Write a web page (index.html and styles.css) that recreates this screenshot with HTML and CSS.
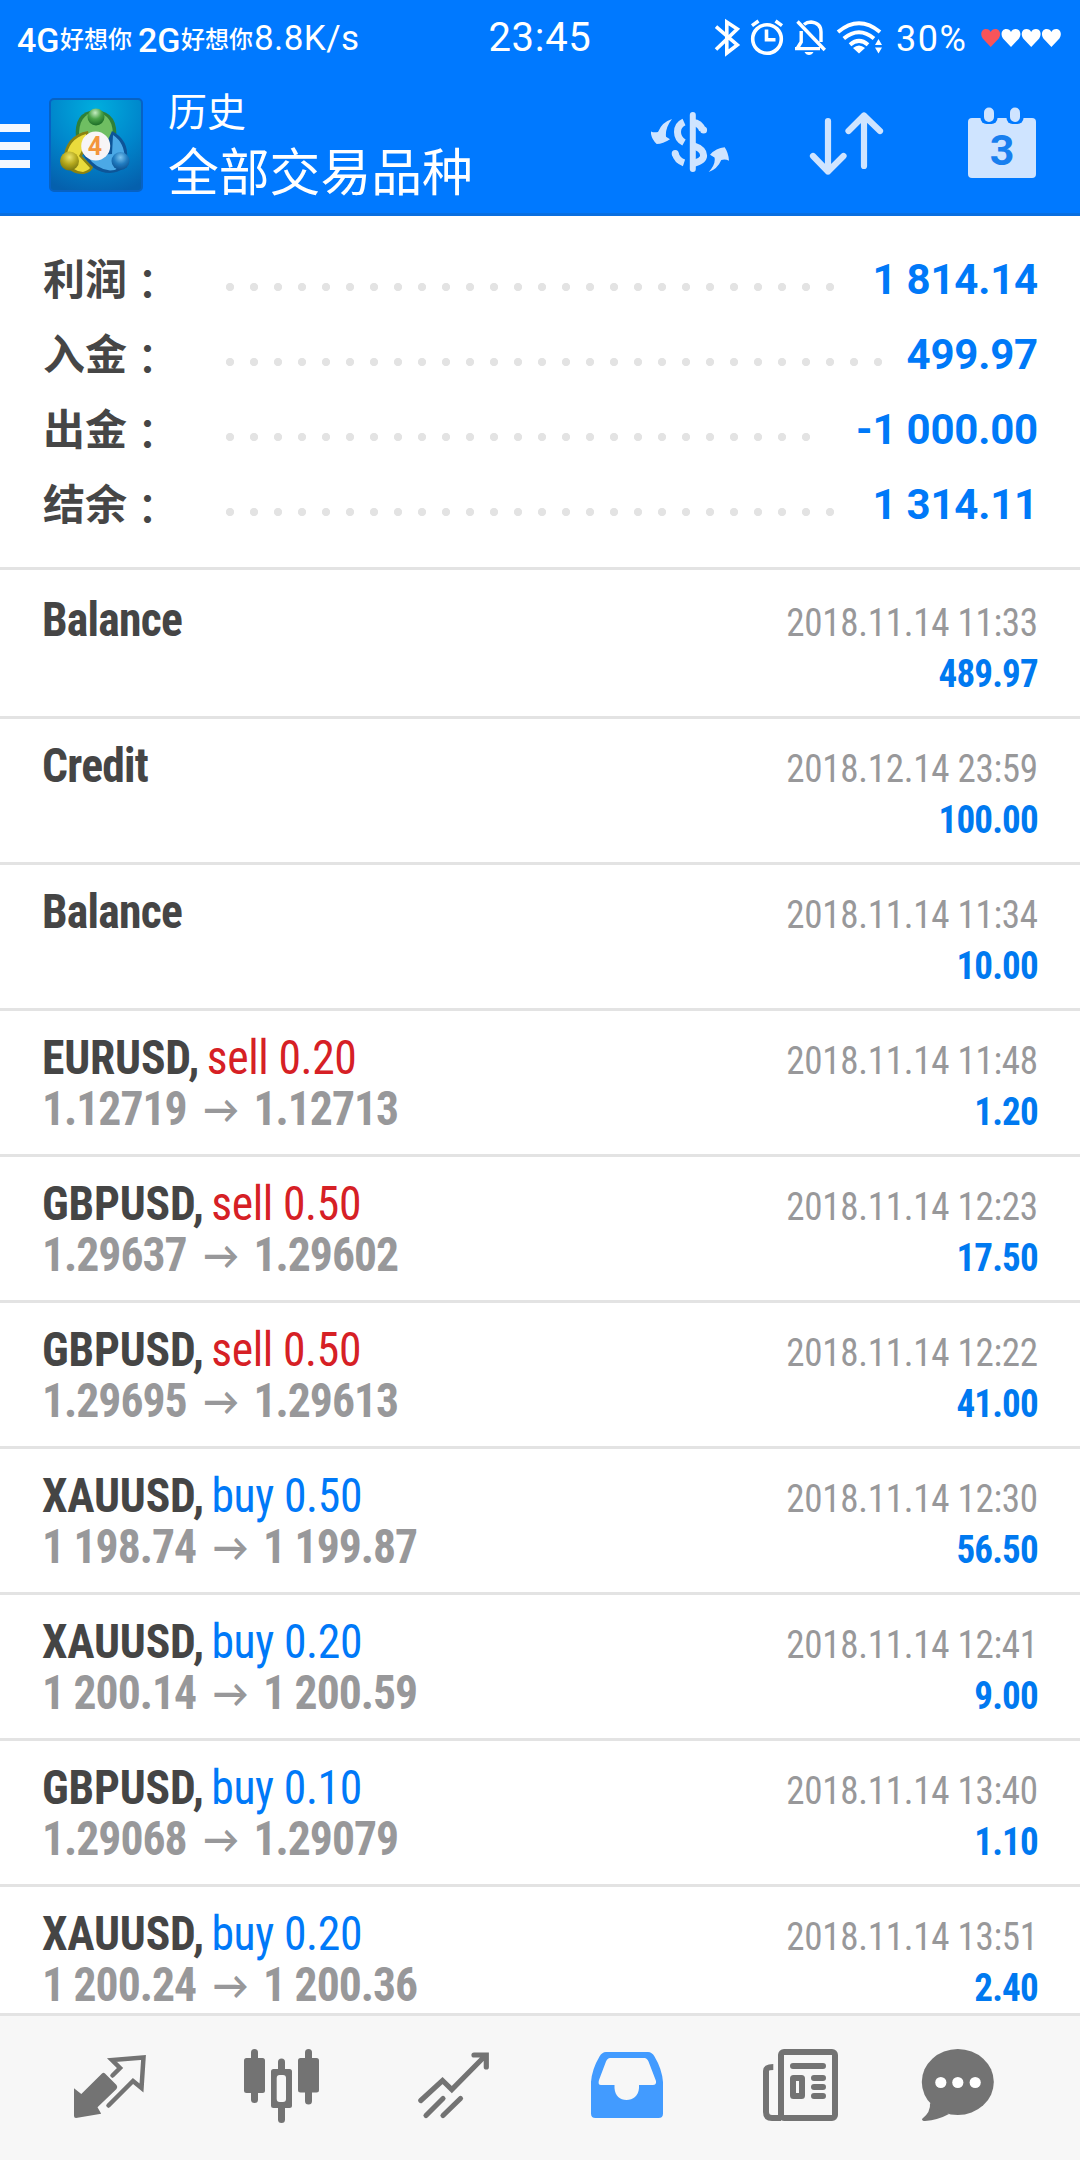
FILE: index.html
```html
<!DOCTYPE html>
<html lang="zh-CN">
<head>
<meta charset="utf-8">
<title>历史</title>
<link rel="stylesheet" href="styles.css">
</head>
<body>
<div class="screen">
  <header class="top">
    <div class="status">
      <div class="carrier">
        <span class="net">4G</span><span class="sim">好想你</span><span class="net second">2G</span><span class="sim">好想你</span><span class="speed">8.8K/s</span>
      </div>
      <div class="clock">23:45</div>
      <div class="indicators">
        <svg width="170" height="40" viewBox="713 17 170 40" fill="none" stroke="#fff" stroke-width="3.6">
          <path d="M716 25.7L737.3 44L726.8 52V21L737.3 28L716 48.5"/>
          <circle cx="767" cy="38" r="14.3"/>
          <path d="M766.5 28.5V38.8H775.5M752 24.6L758.5 20M775.5 20L782 24.6"/>
          <path d="M797.5 20.5L824.8 49M795 47.6H820M801.2 30V41L797.5 47M804 23.5Q807 21 811 21Q821 22 821 31V41" stroke-width="3.4"/>
          <path d="M804.5 51H813.5Q812 54 809 54Q806 54 804.500 51Z" fill="#fff" stroke="none"/>
          <path d="M838 31Q859 13.500 880 31M843.800 37.500Q859 25 874 37.500M850 43.700Q859 36 868 43.700" stroke-width="4"/>
          <path d="M853 47Q859 42 865 47L859 52.500ZM875 44L878.500 38L882 44ZM875 46.500H882L878.500 52.500Z" fill="#fff" stroke="none"/>
        </svg>
        <span class="battery">30%</span>
        <svg width="82" height="20" viewBox="0 0 82 20">
          <defs><path id="heart" d="M10 19L2 10.500C-1 6 1 1 5.200 1C7.500 1 9.200 2 10 4C10.800 2 12.500 1 14.800 1C19 1 21 6 18 10.500Z"/></defs>
          <use href="#heart" x="0.700" fill="#f8545a"/>
          <use href="#heart" x="21" fill="#fff"/>
          <use href="#heart" x="41.200" fill="#fff"/>
          <use href="#heart" x="61.400" fill="#fff"/>
        </svg>
      </div>
    </div>
    <div class="appbar">
      <div class="menu"><i></i><i></i><i></i></div>
      <svg class="logo" width="94" height="94" viewBox="49 97 94 94">
        <defs>
          <radialGradient id="tile" cx=".5" cy=".1" r=".95"><stop offset="0" stop-color="#00aede"/><stop offset=".55" stop-color="#0085cb"/><stop offset="1" stop-color="#0560ad"/></radialGradient>
          <radialGradient id="gn" cx=".45" cy=".25" r=".75"><stop offset="0" stop-color="#c4ecc0"/><stop offset=".5" stop-color="#4aa348"/><stop offset="1" stop-color="#1b6b27"/></radialGradient>
          <radialGradient id="yl" cx=".5" cy=".3" r=".75"><stop offset="0" stop-color="#ece56a"/><stop offset=".5" stop-color="#b5a81c"/><stop offset="1" stop-color="#6f7010"/></radialGradient>
          <radialGradient id="bl" cx=".5" cy=".3" r=".75"><stop offset="0" stop-color="#7cc4ef"/><stop offset=".5" stop-color="#217cc0"/><stop offset="1" stop-color="#0a4c8c"/></radialGradient>
        </defs>
        <rect x="50" y="98" width="92" height="92" rx="4" fill="url(#tile)" stroke="#0762c4" stroke-width="2"/>
        <path d="M76 138Q73 110 96 109Q119 111 116 139L106 158H86Z" fill="#2f8038"/>
        <path d="M79 137Q78 112 96 111.500Q114 113 113 138L106 150H88Z" fill="#6fbe62"/>
        <path d="M112 130Q129 139 127 158Q126 171 110 172Q92 172 83 153L104 148Z" fill="#0d5598"/>
        <path d="M113 134Q125 142 124.500 158Q122 169 110 169.500Q96 168 87 155L112 153Z" fill="#4ba9e6"/>
        <path d="M88 130Q65 134 63 160Q70 174 84 173Q92 171 93 166L82 155L90 140Z" fill="#8a8210"/>
        <path d="M86 133Q68 138 66 158Q73 171 83 171Q89 169 90 167L79 155L86 142Z" fill="#eadb3c"/>
        <circle cx="96" cy="116" r="8.500" fill="url(#gn)"/>
        <circle cx="69.500" cy="160" r="9.500" fill="url(#yl)"/>
        <circle cx="120.500" cy="160" r="9" fill="url(#bl)"/>
        <circle cx="95.700" cy="145" r="14.500" fill="#f7f5f6"/>
        <text x="95" y="154" text-anchor="middle" class="logo-num">4</text>
      </svg>
      <div class="titles">
        <div class="section">历史</div>
        <div class="filter">全部交易品种</div>
      </div>
      <div class="actions">
        <svg width="80" height="81" viewBox="651 104 80 81" fill="none" stroke="#cfe4ff" stroke-width="7">
          <path d="M692.800 115V169" stroke-width="6" stroke-linecap="round"/>
          <path d="M684 122Q677.500 125 677.500 132Q677.500 139 684 142.500M693 122.500Q700 123 702.500 130" />
          <path d="M703.600 130v.1M675.200 153.500v.1" stroke-linecap="round"/>
          <path d="M693 145.500Q703.600 149 703.600 155.500Q703.600 161 693 163.500M675.200 153.500Q677 160.500 684 162.800"/>
          <path d="M672 119Q662 122 658 132Q654 133 650.700 131.300Q651 139 656.700 144Q663 144 670 139.300L666 136.700Q665 128 672 119ZM708.700 172Q716 164 714.500 157.500L710 154.700Q716 148 724.700 147.300Q728.500 153 729 160.700Q725 158.500 721.300 160Q717.500 169 708.700 172Z" fill="#cfe4ff" stroke="none"/>
        </svg>
        <svg width="80" height="81" viewBox="809 104 80 81" fill="none" stroke="#cfe4ff" stroke-width="6.200" stroke-linecap="round" stroke-linejoin="round">
          <path d="M828 121V171.500M813 156L828 171.500L843.500 156M864 166V115.500M848.500 131L864 115.500L880 131"/>
        </svg>
        <svg width="70" height="81" viewBox="967 104 70 81">
          <rect x="968" y="118" width="68" height="60" rx="4" fill="#cfe4ff"/>
          <rect x="980.500" y="108" width="17" height="16" rx="6" fill="#0079ff"/>
          <rect x="1006.500" y="108" width="17" height="16" rx="6" fill="#0079ff"/>
          <rect x="984" y="107.500" width="10" height="14.500" rx="5" fill="#cfe4ff"/>
          <rect x="1010" y="107.500" width="10" height="14.500" rx="5" fill="#cfe4ff"/>
          <text x="1002" y="165" text-anchor="middle" class="cal-num">3</text>
        </svg>
      </div>
    </div>
  </header>

  <section class="summary">
    <div class="line"><span class="label">利润<b>：</b></span><span class="dots" style="width:624px"></span><span class="total">1 814.14</span></div>
    <div class="line"><span class="label">入金<b>：</b></span><span class="dots" style="width:672px"></span><span class="total">499.97</span></div>
    <div class="line"><span class="label">出金<b>：</b></span><span class="dots" style="width:600px"></span><span class="total">-1 000.00</span></div>
    <div class="line"><span class="label">结余<b>：</b></span><span class="dots" style="width:624px"></span><span class="total">1 314.11</span></div>
  </section>

  <main class="deals">
    <div class="deal"><div class="info"><div class="head"><span class="word">Balance</span></div></div><div class="side"><div class="date">2018.11.14 11:33</div><div class="sum">489.97</div></div></div>
    <div class="deal"><div class="info"><div class="head"><span class="word">Credit</span></div></div><div class="side"><div class="date">2018.12.14 23:59</div><div class="sum">100.00</div></div></div>
    <div class="deal"><div class="info"><div class="head"><span class="word">Balance</span></div></div><div class="side"><div class="date">2018.11.14 11:34</div><div class="sum">10.00</div></div></div>
    <div class="deal"><div class="info"><div class="head"><span class="symbol">EURUSD,</span><span class="sell">sell 0.20</span></div><div class="prices">1.12719<span class="to">→</span>1.12713</div></div><div class="side"><div class="date">2018.11.14 11:48</div><div class="sum">1.20</div></div></div>
    <div class="deal"><div class="info"><div class="head"><span class="symbol">GBPUSD,</span><span class="sell">sell 0.50</span></div><div class="prices">1.29637<span class="to">→</span>1.29602</div></div><div class="side"><div class="date">2018.11.14 12:23</div><div class="sum">17.50</div></div></div>
    <div class="deal"><div class="info"><div class="head"><span class="symbol">GBPUSD,</span><span class="sell">sell 0.50</span></div><div class="prices">1.29695<span class="to">→</span>1.29613</div></div><div class="side"><div class="date">2018.11.14 12:22</div><div class="sum">41.00</div></div></div>
    <div class="deal"><div class="info"><div class="head"><span class="symbol">XAUUSD,</span><span class="buy">buy 0.50</span></div><div class="prices">1 198.74<span class="to">→</span>1 199.87</div></div><div class="side"><div class="date">2018.11.14 12:30</div><div class="sum">56.50</div></div></div>
    <div class="deal"><div class="info"><div class="head"><span class="symbol">XAUUSD,</span><span class="buy">buy 0.20</span></div><div class="prices">1 200.14<span class="to">→</span>1 200.59</div></div><div class="side"><div class="date">2018.11.14 12:41</div><div class="sum">9.00</div></div></div>
    <div class="deal"><div class="info"><div class="head"><span class="symbol">GBPUSD,</span><span class="buy">buy 0.10</span></div><div class="prices">1.29068<span class="to">→</span>1.29079</div></div><div class="side"><div class="date">2018.11.14 13:40</div><div class="sum">1.10</div></div></div>
    <div class="deal"><div class="info"><div class="head"><span class="symbol">XAUUSD,</span><span class="buy">buy 0.20</span></div><div class="prices">1 200.24<span class="to">→</span>1 200.36</div></div><div class="side"><div class="date">2018.11.14 13:51</div><div class="sum">2.40</div></div></div>
  </main>

  <nav class="tabs">
    <svg width="80" height="82" viewBox="72 2045 80 82">
      <path d="M74 2088.300L81.300 2094L102 2073.500Q103.500 2072 105 2073.500L116.500 2085Q118 2087 116.500 2089L97.500 2107.300L101.200 2113.700L76 2118Q74 2118 74 2116Z" fill="#737373"/>
      <path d="M112.500 2075.500L120 2068L112 2060L143.500 2057.500L141.500 2088L133 2081L108.500 2105.500" fill="none" stroke="#737373" stroke-width="4.500" stroke-linecap="round"/>
    </svg>
    <svg width="80" height="82" viewBox="244 2045 80 82" fill="#737373">
      <rect x="244" y="2058" width="21" height="35" rx="2.500"/><rect x="251" y="2049" width="7" height="54" rx="3.500"/>
      <rect x="298" y="2058" width="21" height="34.500" rx="2.500"/><rect x="305" y="2049" width="7" height="55.500" rx="3.500"/>
      <rect x="278" y="2058.500" width="7" height="64.500" rx="3.500"/><rect x="271" y="2069" width="21" height="39" rx="2.500"/>
      <rect x="276.700" y="2075" width="9.300" height="27" rx="3" fill="#f7f7f7"/>
    </svg>
    <svg width="80" height="82" viewBox="416 2045 80 82" fill="none" stroke="#737373" stroke-width="5.200" stroke-linecap="round">
      <path d="M420.800 2100.500L442.500 2080.500L451.800 2089.500L485 2056M474 2055H486.300V2067M426 2115.500L443 2098.500M443 2115.500L460.500 2098.500"/>
    </svg>
    <svg width="80" height="82" viewBox="588 2045 80 82" fill="#429bff" fill-rule="evenodd">
      <path d="M606 2052H648Q652 2052 654.500 2056.500Q662 2069 663 2082V2113.500Q663 2118 658.500 2118H595.500Q591 2118 591 2113.500V2082Q592 2069 599.500 2056.500Q602 2052 606 2052ZM610 2058Q607.500 2058 606 2061.500L599 2080Q597.500 2085 601 2085H614.500V2088C615 2096 620 2100 626.500 2100C633 2100 638.500 2096 639 2088V2085H653Q656.500 2085 656 2081L648.500 2061.500Q647 2058 644.500 2058Z"/>
    </svg>
    <svg width="80" height="82" viewBox="760 2045 80 82" fill="none" stroke="#737373" stroke-width="6">
      <rect x="781" y="2052" width="54" height="66" rx="3"/>
      <path d="M773.300 2067Q766 2067 766 2071V2112Q766 2118 772 2118H781"/>
      <path d="M793 2066H823M814 2078H823M814 2087H823M814 2096H823" stroke-linecap="round"/>
      <rect x="793" y="2078" width="9" height="18" rx=".5"/>
    </svg>
    <svg class="last" width="80" height="82" viewBox="918 2045 80 82">
      <path d="M930 2103Q931 2112 922 2119Q922 2121 925 2121Q938 2120 949 2114Z" fill="#737373"/>
      <ellipse cx="957.800" cy="2082" rx="36" ry="33" fill="#737373"/>
      <g fill="#fff"><circle cx="940.800" cy="2082.500" r="5.600"/><circle cx="957.800" cy="2082.500" r="5.600"/><circle cx="975.200" cy="2082.500" r="5.600"/></g>
    </svg>
  </nav>
</div>
</body>
</html>
```
FILE: styles.css
```css
* { box-sizing: border-box; }
body { margin: 0; font-family: Roboto, "Noto Sans CJK SC", sans-serif; background: #fff; }
svg { display: block; flex: none; }
.screen { width: 1080px; height: 2160px; display: flex; flex-direction: column; overflow: hidden; }

.top { height: 216px; flex: none; background: #0079ff; border-bottom: 3px solid #096fe0; color: #fff; }
.status { display: grid; grid-template-columns: 1fr auto 1fr; height: 76px; line-height: 76px; white-space: nowrap; }
.carrier { display: flex; padding-left: 17px; }
.net { font-size: 34px; font-weight: 500; width: 43px; padding-top: 2px; }
.net.second { margin-left: 6px; }
.sim { font-family: "Noto Sans CJK SC", sans-serif; font-size: 24px; width: 72px; font-weight: 500; }
.speed { font-size: 35px; letter-spacing: .4px; padding-left: 1px; padding-top: 1px; }
.clock { font-size: 40px; letter-spacing: .7px; }
.indicators { display: flex; justify-content: flex-end; align-items: center; padding-right: 18px; }
.indicators svg { margin-bottom: 2px; }
.battery { font-size: 36px; letter-spacing: 1.500px; width: 84px; margin-left: 13px; }

.appbar { display: flex; align-items: center; height: 137px; padding-right: 43px; }
.menu { display: flex; flex-direction: column; gap: 10px; width: 30px; padding-top: 3px; }
.menu i { height: 8px; background: #f3f8ff; }
.logo { margin-left: 19px; }
.logo-num { font: 700 25px Roboto, sans-serif; fill: #f3963c; }
.titles { margin-left: 25px; margin-bottom: 6px; font-family: "Noto Sans CJK SC", sans-serif; }
.section { font-size: 39px; line-height: 50px; margin-bottom: 5px; }
.filter { font-size: 50.800px; line-height: 60px; }
.actions { display: flex; margin-left: auto; gap: 78px; }
.cal-num { font: 700 43px Roboto, sans-serif; fill: #187fef; }

.summary { height: 354px; flex: none; padding: 26px 42px 0; border-bottom: 3px solid #e3e3e3; }
.line { display: flex; height: 75px; line-height: 75px; font-size: 42px; font-weight: 700; }
.label { width: 176px; padding-left: 1px; color: #464646; font-family: "Noto Sans CJK SC", sans-serif; margin-top: -3px; }
.label b { display: inline-block; padding-left: 10px; padding-top: 2px; height: 75px; vertical-align: top; font-weight: 500; }
.dots { height: 75px; background: radial-gradient(circle at 12px 45px, #e3e3e3 3.700px, transparent 4.500px) 0 0 / 24px 75px repeat-x; }
.total { margin-left: auto; color: #0079f8; letter-spacing: -.2px; }

.deals { flex: 1; min-height: 0; overflow: hidden; padding-top: 3px; }
.deal { display: flex; justify-content: space-between; height: 146px; padding: 21px 42px 0; border-bottom: 3px solid #e3e3e3; font-family: "Roboto Condensed", sans-serif; line-height: 51px; font-size: 48px; white-space: nowrap; }
.info { transform: scaleX(.95); transform-origin: 0 0; }
.head { display: flex; gap: 8px; height: 51px; color: #454545; }
.word { font-weight: 700; letter-spacing: -.8px; }
.symbol { font-weight: 700; letter-spacing: -.2px; }
.sell, .buy { letter-spacing: -.4px; }
.sell { color: #d62025; }
.buy { color: #0079f8; }
.prices { height: 51px; font-weight: 700; letter-spacing: -1.050px; color: #98989a; }
.to { display: inline-block; width: 70.500px; padding-left: 2px; text-align: center; font: 700 38px/38px Lato, sans-serif; letter-spacing: 0; vertical-align: 2px; }
.side { padding-top: 4px; text-align: right; font-size: 39px; transform: scaleX(.95); transform-origin: 100% 0; }
.date { letter-spacing: -.300px; color: #98989a; }
.sum { font-weight: 700; letter-spacing: -.9px; color: #0079f0; }

.tabs { display: flex; gap: 92px; height: 147px; flex: none; padding: 29px 0 0 72px; background: #f7f7f7; border-top: 3px solid #e3e3e3; }
.last { margin-left: -14px; }
```
